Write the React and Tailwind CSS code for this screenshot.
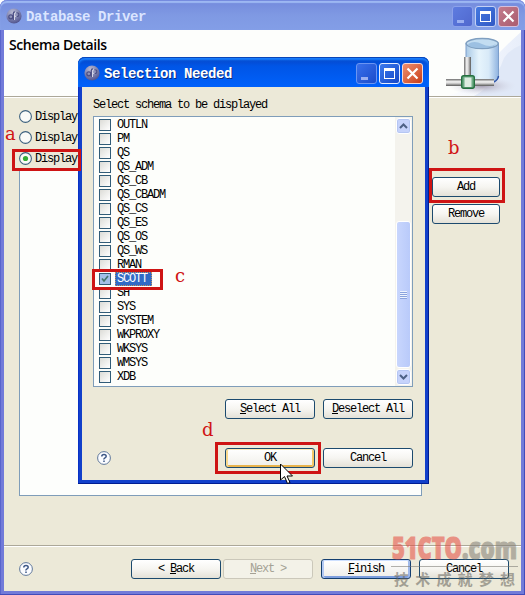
const schemas = [
  'OUTLN', 'PM', 'QS', 'QS_ADM', 'QS_CB', 'QS_CBADM', 'QS_CS', 'QS_ES', 'QS_OS', 'QS_WS',
  'RMAN', 'SCOTT', 'SH', 'SYS', 'SYSTEM', 'WKPROXY', 'WKSYS', 'WMSYS', 'XDB',
];

// Round app logo in the title bars
function AppIcon() {
  return (
    <svg width="16" height="16" viewBox="0 0 16 16">
      <defs>
        <radialGradient id="orb" cx="0.4" cy="0.25" r="0.8">
          <stop offset="0" stopColor="#b9bbd4" />
          <stop offset="0.5" stopColor="#8488b3" />
          <stop offset="1" stopColor="#4a4d8a" />
        </radialGradient>
      </defs>
      <circle cx="8" cy="8" r="7.6" fill="url(#orb)" />
      <circle cx="4.8" cy="8.8" r="2" fill="none" stroke="#4c4f84" strokeWidth="1.2" />
      <path d="M7.300 12V5.500Q7.300 3.800 9 3.800" fill="none" stroke="#4c4f84" strokeWidth="1.2" />
      <path d="M8.500 12V6.200Q8.500 4.600 10 4.600M8.500 8.300H11" fill="none" stroke="#d7d8e8" strokeWidth="1" />
      <path d="M10.500 4.800Q13 4.600 12.800 6.800T10.500 8.300" fill="none" stroke="#4c4f84" strokeWidth="1.1" />
    </svg>
  );
}

// Minimize / maximize / close
function WindowButtons({ active }) {
  const blue = active
    ? 'bg-linear-to-br from-[#3c79ed] to-[#1647c7] border-[#e6edff]'
    : 'bg-linear-to-br from-[#4579e0] to-[#3158c5] border-[#c3d0f5]';
  const dim = active
    ? 'bg-linear-to-br from-[#3970ec] to-[#1b4bca] border-[#6b95f2]'
    : 'bg-linear-to-br from-[#5e7ce0] to-[#5068ce] border-[#8ba1eb]';
  const red = active
    ? 'bg-linear-to-br from-[#ee8e6d] to-[#c83b12] border-[#f6d9d5]'
    : 'bg-linear-to-br from-[#c37b8c] to-[#aa5c70] border-[#d5bfdc]';
  return (
    <div className="flex gap-[2px]">
      <div className={`h-[21px] w-[21px] rounded-[3px] border ${dim}`}>
        <div className="mt-[13px] ml-[4px] h-[3px] w-[7px] bg-[#9aaff1]" />
      </div>
      <div className={`h-[21px] w-[21px] rounded-[3px] border p-[4px] ${blue}`}>
        <div className="h-[11px] w-[11px] border border-t-[3px] border-white" />
      </div>
      <div className={`h-[21px] w-[21px] rounded-[3px] border ${red}`}>
        <svg width="19" height="19" viewBox="0 0 19 19">
          <path d="M4.500 4.500l10 10M14.500 4.500l-10 10" stroke="#fff" strokeWidth="2.2" />
        </svg>
      </div>
    </div>
  );
}

function Button({ children, className = 'w-[90px]', tone = 'normal' }) {
  const tones = {
    normal: 'border-[#1c4a6e] text-black bg-linear-to-b from-white via-[#f6f5f1] to-[#e4e1d7]',
    disabled: 'border-[#cbc8ba] text-[#a5a295] bg-[#f3f2e8]',
    focus: 'border-[#1c4a6e] text-black bg-linear-to-b from-white to-[#f0efe9] shadow-[inset_0_1px_0_#fce9b5,inset_2px_0_0_#f8d88c,inset_-2px_0_0_#f3c868,inset_0_-2px_0_#e8b34c]',
    primary: 'border-[#143f70] text-black bg-linear-to-b from-white to-[#eeede9] shadow-[inset_0_1px_0_#cee0ff,inset_2px_0_0_#b3c9f3,inset_-2px_0_0_#a0b9ea,inset_0_-2px_0_#7d9ede]',
  };
  return (
    <button className={`h-[20px] rounded-[3px] border pt-px text-center leading-[17px] whitespace-pre ${className} ${tones[tone]}`}>
      {children}
    </button>
  );
}

function HelpIcon() {
  return (
    <svg width="14" height="14" viewBox="0 0 14 14">
      <circle cx="7" cy="7" r="6.4" fill="#fbfcff" stroke="#60789a" strokeWidth="1" />
      <path d="M4.800 5.400Q4.800 3.500 7 3.500T9.200 5.300Q9.200 6.200 8 6.800T7 8.500M7 9.500v1.500" fill="none" stroke="#3d5786" strokeWidth="1.5" />
    </svg>
  );
}

function Radio({ checked }) {
  return (
    <svg width="13" height="13" viewBox="0 0 13 13">
      <circle cx="6.5" cy="6.5" r="5.9" fill="#fafbf8" stroke="#3e627f" strokeWidth="1.1" />
      {checked && <circle cx="6.5" cy="6.5" r="2.6" fill="#36ad36" />}
    </svg>
  );
}

function DatabaseArt() {
  return (
    <svg width="77" height="66" viewBox="0 0 77 66">
      <defs>
        <linearGradient id="can" x1="0" x2="1">
          <stop offset="0" stopColor="#a9c9e6" />
          <stop offset="0.4" stopColor="#e6f4fc" />
          <stop offset="0.7" stopColor="#d8eaf8" />
          <stop offset="1" stopColor="#8fb3e0" />
        </linearGradient>
        <linearGradient id="pipeH" x1="0" x2="0" y1="0" y2="1">
          <stop offset="0" stopColor="#6c6c6c" />
          <stop offset="0.4" stopColor="#f8f8f8" />
          <stop offset="0.65" stopColor="#c4c4c4" />
          <stop offset="1" stopColor="#585858" />
        </linearGradient>
        <linearGradient id="pipeV" x1="0" x2="1">
          <stop offset="0" stopColor="#6c6c6c" />
          <stop offset="0.4" stopColor="#f8f8f8" />
          <stop offset="0.65" stopColor="#c4c4c4" />
          <stop offset="1" stopColor="#585858" />
        </linearGradient>
        <linearGradient id="sky" x1="0" x2="1">
          <stop offset="0" stopColor="#fdfeff" />
          <stop offset="1" stopColor="#e8eefa" />
        </linearGradient>
        <radialGradient id="shade">
          <stop offset="0" stopColor="#a59fb2" />
          <stop offset="1" stopColor="#d9dbe8" stopOpacity="0" />
        </radialGradient>
      </defs>
      <path d="M0 66Q26 62 38 44T77 2V66Z" fill="url(#sky)" />
      <path d="M30 66Q50 56 60 28Q66 19 77 15V66Z" fill="#e0e8f7" />
      <ellipse cx="38" cy="56" rx="34" ry="9" fill="url(#shade)" />
      <path d="M22 13V51H50Q54 50 54.500 47V13Z" fill="url(#can)" stroke="#7c9ecb" />
      <path d="M50 52Q54 50 54.500 46" fill="none" stroke="#2f55a8" strokeWidth="1.500" />
      <ellipse cx="38.2" cy="13.500" rx="16" ry="5" fill="#c3ddf1" stroke="#7f9fc0" strokeWidth="1.5" />
      <path d="M24 14Q30 10 38 14T52 14Q50 18 37 18T24 14" fill="#9cc0e2" />
      <rect x="20" y="27" width="7" height="20" fill="url(#pipeV)" />
      <rect x="2" y="49" width="48" height="7" fill="url(#pipeH)" />
      <rect x="17.700" y="45.700" width="12.600" height="12.600" rx="2" fill="#6cab84" stroke="#24703f" strokeWidth="1.4" />
      <rect x="20.500" y="47.500" width="7" height="9.500" fill="#dcece0" />
    </svg>
  );
}

function Scrollbar() {
  const cap = 'h-[16px] w-[15px] rounded-[3px] border border-white bg-[#c6d3fb] ring-1 ring-inset ring-[#b5c6f3]';
  return (
    <div className="flex w-[17px] flex-col items-center bg-[#f4f3ed] pt-px pb-px">
      <div className={cap}>
        <svg width="13" height="14" viewBox="0 0 13 14">
          <path d="M3 9l3.500-3.500L10 9" fill="none" stroke="#4d6185" strokeWidth="2" />
        </svg>
      </div>
      <div className="flex-1" />
      <div className="mb-px flex h-[147px] w-[15px] flex-col items-center justify-center rounded-[3px] border border-white bg-linear-to-r from-[#c8d6fd] to-[#b9cafa]">
        <div className="h-px w-[7px] bg-[#eef4fe]" />
        <div className="h-px w-[7px] bg-[#8aa3dd]" />
        <div className="h-px w-[7px] bg-[#eef4fe]" />
        <div className="h-px w-[7px] bg-[#8aa3dd]" />
        <div className="h-px w-[7px] bg-[#eef4fe]" />
        <div className="h-px w-[7px] bg-[#8aa3dd]" />
        <div className="h-px w-[7px] bg-[#eef4fe]" />
        <div className="h-px w-[7px] bg-[#8aa3dd]" />
      </div>
      <div className={cap}>
        <svg width="13" height="14" viewBox="0 0 13 14">
          <path d="M3 5l3.500 3.500L10 5" fill="none" stroke="#4d6185" strokeWidth="2" />
        </svg>
      </div>
    </div>
  );
}

function SchemaRow({ name, checked }) {
  return (
    <div className="flex h-[14px] items-center">
      <div className={`mr-[4px] h-[12px] w-[12px] shrink-0 border border-[#315c78] ${checked ? 'bg-[#a3bfe9]' : 'bg-linear-to-br from-[#dcdcd7] to-white'}`}>
        {checked && (
          <svg width="10" height="10" viewBox="0 0 10 10">
            <path d="M2 4.500l2 2.500 4-5" fill="none" stroke="#46776d" strokeWidth="1.7" />
          </svg>
        )}
      </div>
      <span className={`h-[14px] ${checked ? 'w-[37px] border border-dotted border-[#c29062] bg-[#316ac5] pl-px leading-[12px] text-white' : 'pl-[2px] leading-[14px]'}`}>
        {name}
      </span>
    </div>
  );
}

function SelectionDialog() {
  return (
    <div className="absolute top-[57px] left-[78px] flex h-[427px] w-[351px] flex-col rounded-t-[7px] bg-[#1240ca] shadow-[inset_-1px_-1px_0_#001d91,inset_1px_0_0_#0831c6]">
      <div className="flex h-[30px] shrink-0 items-center rounded-t-[7px] bg-linear-to-b from-[#0744c3] via-[#0055e6] via-30% to-[#0061fb] pt-[2px] pr-[6px] pl-[6px] shadow-[inset_0_1px_0_#0945b7,inset_0_3px_2px_#1980ff]">
        <AppIcon />
        <span className="ml-[4px] flex-1 pt-px text-[14px] leading-[18px] font-bold tracking-[-0.4px] text-white [text-shadow:1px_1px_#082b80]">Selection Needed</span>
        <WindowButtons active />
      </div>
      <div className="mr-[4px] mb-[4px] ml-[4px] flex flex-1 flex-col bg-[#ece9d8] pr-[12px] pl-[11px]">
        <p className="mt-[10px] h-[19px] leading-[16px]">Select schema to be displayed</p>
        <div className="flex h-[271px] justify-between border border-[#7f9db9] bg-[#fdfefb]">
          <div className="pt-px pl-[5px]">
            {schemas.map((name) => (
              <SchemaRow key={name} name={name} checked={name === 'SCOTT'} />
            ))}
          </div>
          <Scrollbar />
        </div>
        <div className="mt-[12px] flex justify-end gap-[8px]">
          <Button><u>S</u>elect All</Button>
          <Button><u>D</u>eselect All</Button>
        </div>
        <div className="mt-[29px] flex items-center gap-[8px]">
          <div className="flex-1 pl-[4px]"><HelpIcon /></div>
          <Button tone="focus">OK</Button>
          <Button>Cancel</Button>
        </div>
      </div>
    </div>
  );
}

// Red frames and letters marking the steps
function Annotations() {
  const letter = 'absolute font-["DejaVu_Serif",serif] text-[18px] leading-[20px] tracking-normal text-[#d01414]';
  return (
    <>
      <div className="absolute top-[149px] left-[12px] h-[22px] w-[69px] border-[3px] border-[#ce1414]" />
      <div className="absolute top-[168px] left-[429px] h-[35px] w-[76px] border-[3px] border-[#ce1414]" />
      <div className="absolute top-[269px] left-[92px] h-[21px] w-[71px] border-[3px] border-[#ce1414]" />
      <div className="absolute top-[442px] left-[215px] h-[32px] w-[106px] border-[3px] border-[#ce1414]" />
      <span className={`${letter} top-[124px] left-[5px]`}>a</span>
      <span className={`${letter} top-[138px] left-[448px]`}>b</span>
      <span className={`${letter} top-[266px] left-[175px]`}>c</span>
      <span className={`${letter} top-[420px] left-[202px]`}>d</span>
    </>
  );
}

function Watermark() {
  return (
    <div className="absolute top-[523px] left-[388px] w-[133px] opacity-55">
      <svg width="133" height="43" viewBox="0 0 133 43" className="block">
        <g fontFamily="Open Sans" fontWeight="800" fontSize="30" letterSpacing="0">
          <text x="4" y="36" fill="#e64a3e" stroke="#e64a3e" strokeWidth="1.2" textLength="70" lengthAdjust="spacingAndGlyphs">51CTO</text>
          <text x="74" y="36" fill="#817d74" stroke="#817d74" strokeWidth="1.2" textLength="55" lengthAdjust="spacingAndGlyphs">.com</text>
        </g>
      </svg>
      <div className="mx-[3px] h-px bg-[#77766f]" />
      <div className="mt-[3px] flex justify-between px-[6px] font-['Noto_Sans_CJK_SC',sans-serif] text-[15px] leading-[18px] font-bold tracking-normal text-[#66645d]">
        {['技', '术', '成', '就', '梦', '想'].map((ch) => (
          <span key={ch}>{ch}</span>
        ))}
      </div>
    </div>
  );
}

export default function App() {
  return (
    <div className="relative flex h-[595px] w-[525px] flex-col overflow-hidden rounded-t-[7px] bg-[#727bd9] font-['Liberation_Mono',monospace] text-[12px] tracking-[-1.2px] text-black shadow-[inset_-1px_-1px_0_#414cba,inset_1px_0_0_#5965cc]">
      <div className="flex h-[30px] shrink-0 items-center rounded-t-[7px] bg-linear-to-b from-[#7389dc] via-[#7f99e3] via-50% to-[#839ee7] pt-[2px] pr-[6px] pl-[6px] shadow-[inset_0_1px_0_#758bdf,inset_0_3px_1px_#9db7f2]">
        <AppIcon />
        <span className="ml-[4px] flex-1 pt-px text-[14px] leading-[18px] font-bold tracking-[-0.4px] text-[#dbe5ff]">Database Driver</span>
        <WindowButtons />
      </div>
      <div className="mx-[4px] mb-[4px] flex flex-1 flex-col bg-[#ece9d8]">
        <div className="flex h-[67px] justify-between border-b border-[#aca899] bg-[#fdfefc]">
          <h1 className="pt-[6px] pl-[5px] font-['Open_Sans',sans-serif] text-[14px] leading-[17px] font-semibold tracking-[-0.4px]">Schema Details</h1>
          <DatabaseArt />
        </div>
        <div className="flex flex-1 border-t border-white pl-[15px]">
          <div className="w-[403px] pt-[8px]">
            {[false, false, true].map((checked, i) => (
              <div key={i} className="flex h-[21px] items-center gap-[3px]">
                <Radio checked={checked} />
                <span>Display</span>
              </div>
            ))}
            <div className="h-[327px] border border-[#7f9db9] bg-[#fdfefc]" />
          </div>
          <div className="flex flex-col gap-[7px] pt-[79px] pl-[10px]">
            <Button className="w-[68px]">Add</Button>
            <Button className="w-[68px]">Remove</Button>
          </div>
        </div>
        <div className="flex h-[46px] items-center border-t border-[#aca899] pt-px pr-[12px] pl-[15px] shadow-[inset_0_1px_0_#fff]">
          <div className="flex-1"><HelpIcon /></div>
          <Button>{'< '}<u>B</u>ack</Button>
          <Button className="ml-[2px] w-[90px]" tone="disabled"><u>N</u>ext &gt;</Button>
          <Button className="ml-[8px] w-[90px]" tone="primary"><u>F</u>inish</Button>
          <Button className="ml-[8px] w-[90px]">Cancel</Button>
        </div>
      </div>
      <SelectionDialog />
      <Annotations />
      <Watermark />
      <svg className="absolute top-[463px] left-[280px]" width="13" height="22" viewBox="0 0 13 22">
        <path d="M0.500 1v16l4-3.500 3 7 2.500-1-3-6.500h5.500z" fill="#fff" stroke="#000" />
      </svg>
    </div>
  );
}
